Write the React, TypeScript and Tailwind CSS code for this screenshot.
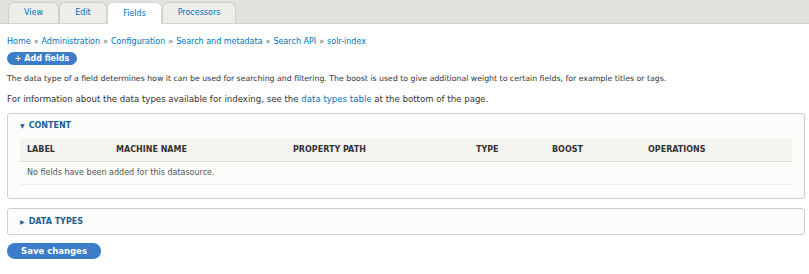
const font = { fontFamily: '"DejaVu Sans", Verdana, sans-serif' };

const tabs = [
  { label: "View", w: "w-[51px]" },
  { label: "Edit", w: "w-[48px]" },
  { label: "Fields", w: "w-[55px]", active: true },
  { label: "Processors", w: "w-[74px]" },
];

const crumbs = ["Home", "Administration", "Configuration", "Search and metadata", "Search API", "solr-index"];

export default function App() {
  return (
    <div className="w-[809px] h-[274px] bg-white text-[#333] text-[8px] leading-none overflow-hidden" style={font}>
      {/* tabs */}
      <div className="h-[24px] bg-[#e1e2dc] border-b border-[#d4d4ce] flex items-end pl-[8px]">
        {tabs.map((t) => (
          <div
            key={t.label}
            className={`${t.w} h-[21px] flex items-center justify-center rounded-t-[6px] border border-b-0 text-[8px] ${
              t.active
                ? "bg-white border-[#d9d9d4] text-[#0074bd] h-[22px] -mb-px"
                : "bg-[#ededea] border-[#cfcfca] text-[#0074bd]"
            }`}
          >
            {t.label}
          </div>
        ))}
      </div>

      <div className="pl-[7px] pr-[4px]">
        {/* breadcrumb */}
        <div className="mt-[14px] flex items-center text-[8px] text-[#0074bd]">
          {crumbs.map((c, i) => (
            <span key={c} className="flex items-center">
              {i > 0 && <span className="text-[#666] mx-[3px]">»</span>}
              {c}
            </span>
          ))}
        </div>

        <button className="mt-[6px] h-[13px] w-[70px] rounded-full bg-[#3b7dc8] text-white text-[8px] font-bold flex items-center justify-center">
          + Add fields
        </button>

        <p className="mt-[10px] text-[7.8px]">
          The data type of a field determines how it can be used for searching and filtering. The boost is used to give additional weight to certain fields, for example titles or tags.
        </p>
        <p className="mt-[12px] text-[8.6px]">
          For information about the data types available for indexing, see the <span className="text-[#0074bd]">data types table</span> at the bottom of the page.
        </p>

        {/* content fieldset */}
        <div className="mt-[10px] h-[86px] border border-[#ccc] rounded-[3px] bg-[#fcfcfa] px-[12px]">
          <div className="mt-[8px] flex items-center text-[8px] font-bold text-[#1d5f94]">
            <span className="text-[6px] mr-[4px]">▼</span>CONTENT
          </div>
          <div className="mt-[9px] h-[23px] bg-[#f3f3f0] border-b border-[#e1e1dc] flex items-center text-[8px] font-bold text-[#333]">
            <span className="pl-[7px] w-[96px]">LABEL</span>
            <span className="w-[177px]">MACHINE NAME</span>
            <span className="w-[183px]">PROPERTY PATH</span>
            <span className="w-[76px]">TYPE</span>
            <span className="w-[96px]">BOOST</span>
            <span>OPERATIONS</span>
          </div>
          <div className="h-[23px] border-b border-[#eeeeea] flex items-center pl-[7px] text-[8px] text-[#555]">
            No fields have been added for this datasource.
          </div>
        </div>

        {/* data types fieldset */}
        <div className="mt-[9px] h-[27px] border border-[#ccc] rounded-[3px] bg-[#fcfcfa] px-[12px] flex items-center text-[8px] font-bold text-[#1d5f94]">
          <span className="text-[6px] mr-[4px]">▶</span>DATA TYPES
        </div>

        <button className="mt-[8px] h-[16px] w-[94px] rounded-full bg-[#3b7dc8] text-white text-[8.5px] font-bold flex items-center justify-center">
          Save changes
        </button>
      </div>
    </div>
  );
}
